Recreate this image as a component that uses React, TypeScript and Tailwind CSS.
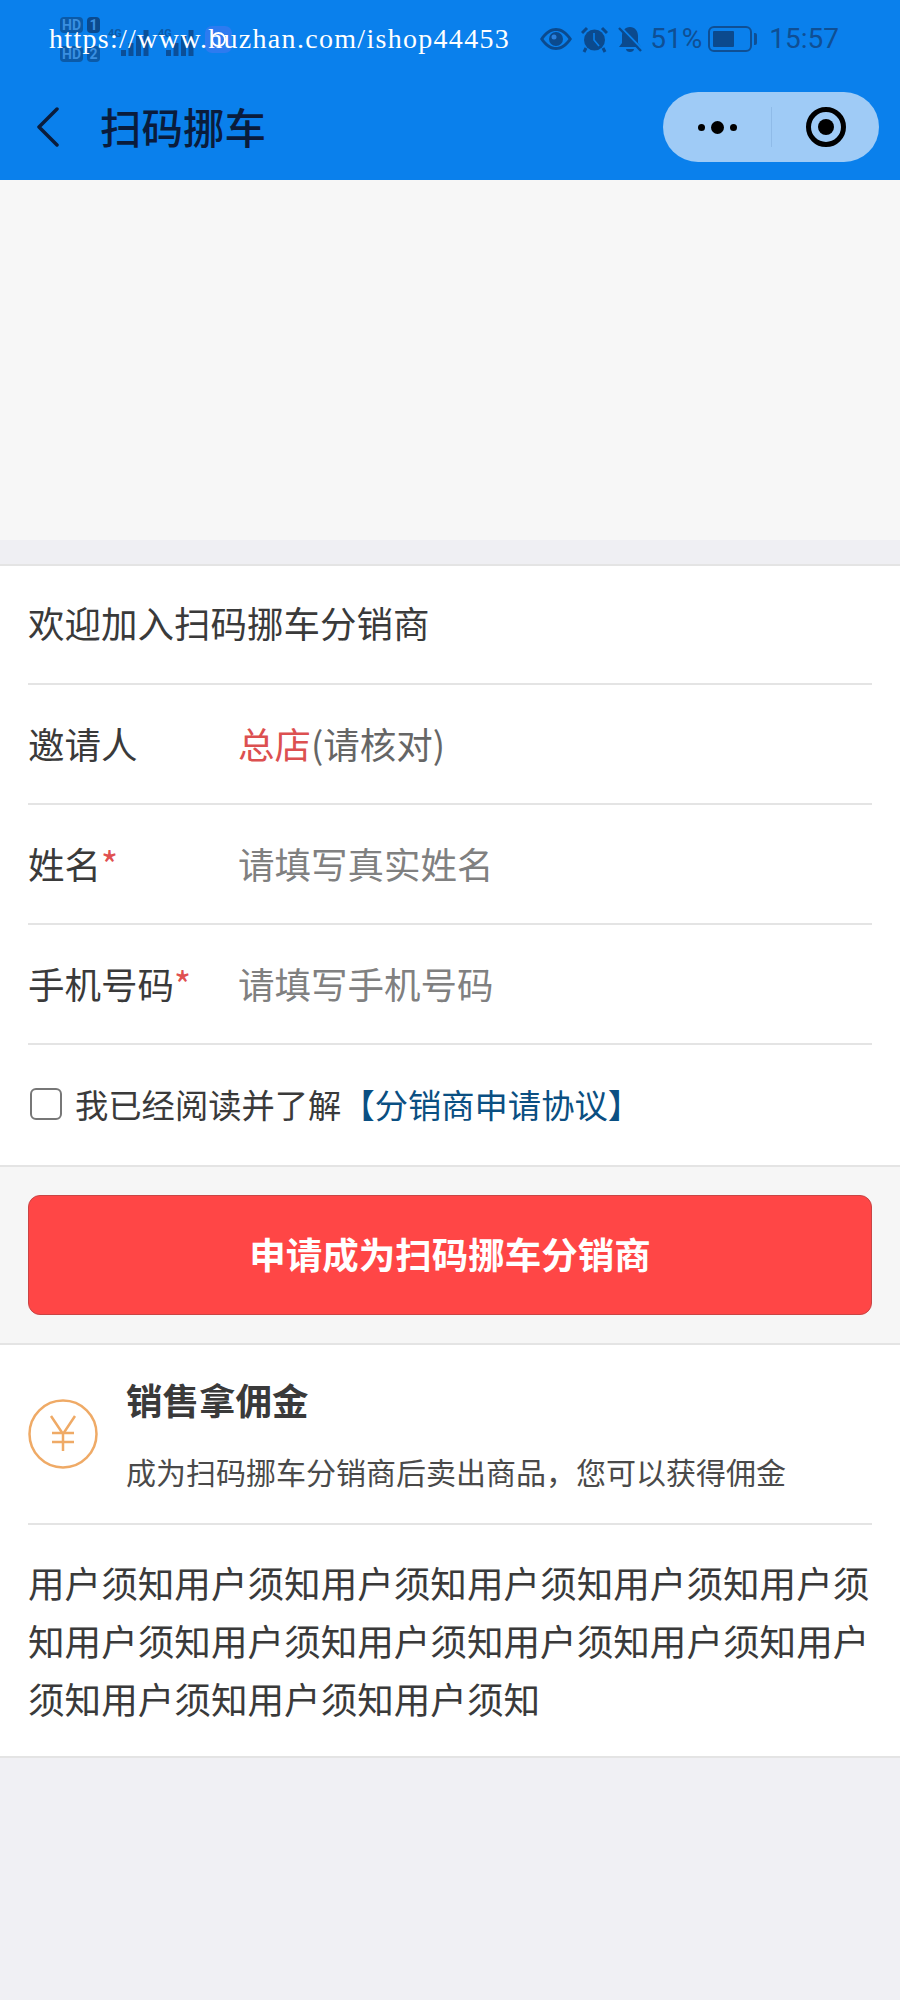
import React from 'react';

const cjk = "font-['Noto_Sans_CJK_SC','Noto_Sans',sans-serif]";

const StatusIcons: React.FC = () => (
  <div className="flex items-center">
    <svg width="32" height="22" viewBox="0 0 32 22" className="mr-[9px]">
      <path d="M0 11 C5 3 11 0 16 0 C21 0 27 3 32 11 C27 19 21 22 16 22 C11 22 5 19 0 11 Z M3.5 11 C7.5 16.500 11.500 19 16 19 C20.500 19 24.500 16.500 28.500 11 C24.500 5.500 20.500 3 16 3 C11.500 3 7.500 5.500 3.500 11 Z" fill="#0b4a8e" fillRule="evenodd" />
      <circle cx="16" cy="11" r="7" fill="#0b4a8e" />
      <circle cx="14" cy="9" r="2.500" fill="#2c80dc" />
    </svg>
    <svg width="27" height="27" viewBox="0 0 27 27" className="mr-[9px]">
      <circle cx="13.500" cy="14" r="10.500" fill="#0b4a8e" />
      <path d="M13 7 V14 L18 20" stroke="#0a80ec" strokeWidth="1.600" fill="none" />
      <path d="M1 7 L6 2 M26 7 L21 2" stroke="#0b4a8e" strokeWidth="3" />
      <path d="M5 22 L3 26 M22 22 L24 26" stroke="#0b4a8e" strokeWidth="3" />
    </svg>
    <svg width="26" height="27" viewBox="0 0 26 27" className="mr-[7px]">
      <path d="M13 1 C18 1 21 5 21 10 V17 L24 21 H2 L5 17 V10 C5 5 8 1 13 1 Z" fill="#0b4a8e" />
      <path d="M9 23 H17 C17 27 9 27 9 23 Z" fill="#0b4a8e" />
      <path d="M3.500 1 L26 24" stroke="#0a80ec" strokeWidth="2.200" />
      <path d="M2 2 L24 25" stroke="#0b4a8e" strokeWidth="2.400" />
    </svg>
    <span className="mr-[6px] font-['Roboto',sans-serif] text-[28px] leading-none text-[#0f4f94]">51%</span>
    <div className="mr-[12px] flex items-center">
      <div className="flex h-[26px] w-[44px] items-center rounded-[6px] border-2 border-[#0f4f94] p-[3px]">
        <div className="h-full w-[62%] rounded-[1px] bg-[#0b4a8e]" />
      </div>
      <div className="ml-[2px] h-[12px] w-[3px] rounded-r-[2px] bg-[#0f4f94]" />
    </div>
    <span className="font-['Roboto',sans-serif] text-[28px] leading-none text-[#0f4f94]">15:57</span>
  </div>
);

const Bars: React.FC<{ width: number }> = ({ width }) => (
  <svg width={width} height="26" viewBox="0 0 30 26">
    <path d="M1 26 V20 H6 V26 Z M8.500 26 V13 H13.500 V26 Z M16 26 V6 H21 V26 Z M23.500 26 V0 H28.500 V26 Z" fill="#0b4f98" />
  </svg>
);

const Signal: React.FC = () => (
  <div className="flex items-center">
    <div className="mr-[8px] grid grid-cols-[23px_13px] gap-x-[4px] gap-y-[13px] font-['Roboto',sans-serif] text-[14px] font-bold leading-[16px] text-[#3a8fe0]">
      <span className="rounded-[4px] bg-[#0b5aa8] text-center">HD</span>
      <span className="rounded-[4px] bg-[#0b4a8e] text-center">1</span>
      <span className="rounded-[4px] bg-[#0b5aa8] text-center">HD</span>
      <span className="rounded-[4px] bg-[#0b5aa8] text-center">2</span>
    </div>
    <div className="relative mr-[8px] pl-[12px] pt-[8px]">
      <Bars width={30} />
      <span className="absolute left-0 top-[6px] font-['Roboto',sans-serif] text-[11px] font-bold leading-none text-[#0b5aa8]">4G</span>
    </div>
    <div className="relative mr-[7px] pl-[4px] pt-[8px]">
      <Bars width={36} />
      <span className="absolute left-0 top-[6px] font-['Roboto',sans-serif] text-[11px] font-bold leading-none text-[#0b5aa8]">4G</span>
    </div>
    <div className="mt-[1px] flex h-[27px] w-[27px] items-center justify-center rounded-[7px] bg-[#2d7bf0]">
      <div className="h-[15px] w-[15px] rounded-full border-2 border-white" />
    </div>
  </div>
);

const Row: React.FC<{ label: React.ReactNode; children: React.ReactNode }> = ({ label, children }) => (
  <div className="flex h-[120px] items-center border-b-2 border-[#e4e4e4]">
    <div className="w-[210px] shrink-0 text-[36.5px] leading-none text-[#3a3a3a]">{label}</div>
    <div className="text-[36.5px] leading-none">{children}</div>
  </div>
);

const Star = () => <span className="text-[#e05050]">*</span>;

export default function App() {
  const notice = '用户须知'.repeat(15);
  return (
    <div className={`${cjk} flex h-[2000px] w-[900px] flex-col overflow-hidden bg-[#f0f0f4]`}>
      {/* header */}
      <div className="h-[180px] bg-[#0a80ec]">
        <div className="relative flex h-[78px] items-center justify-between pl-[60px] pr-[61px]">
          <Signal />
          <StatusIcons />
          {/* watermark over the status bar */}
          <span className="absolute left-[49px] top-[23px] whitespace-nowrap font-['Liberation_Serif',serif] text-[28px] leading-[32px] tracking-[1.300px] text-white">
            https://www.huzhan.com/ishop44453
          </span>
        </div>
        <div className="flex h-[98px] items-center justify-between pr-[21px]">
          <div className="flex items-center">
            <svg width="24" height="40" viewBox="0 0 24 40" className="ml-[36px]">
              <path d="M21 2 L3 20 L21 38" fill="none" stroke="#0a1c3c" strokeWidth="3.500" strokeLinecap="round" strokeLinejoin="round" />
            </svg>
            <span className="ml-[40px] text-[41.5px] font-medium leading-none text-[#0a1c3c]">扫码挪车</span>
          </div>
          <div className="flex h-[70px] w-[216px] items-center rounded-full bg-[#9fcbf6]">
            <div className="flex w-[108px] items-center justify-center gap-[6px]">
              <span className="h-[7px] w-[7px] rounded-full bg-black" />
              <span className="h-[13px] w-[13px] rounded-full bg-black" />
              <span className="h-[7px] w-[7px] rounded-full bg-black" />
            </div>
            <div className="h-[40px] w-px bg-[#8fbbe8]" />
            <div className="flex flex-1 items-center justify-center">
              <div className="flex h-[40px] w-[40px] items-center justify-center rounded-full border-[5px] border-black">
                <span className="h-[16px] w-[16px] rounded-full bg-black" />
              </div>
            </div>
          </div>
        </div>
      </div>

      {/* empty banner */}
      <div className="h-[360px] bg-[#f7f7f7]" />
      <div className="h-[24px] bg-[#efeff3]" />

      {/* form */}
      <div className="border-y-2 border-[#e4e4e4] bg-white px-[28px]">
        <div className="flex h-[119px] items-center border-b-2 border-[#e4e4e4] pb-[3px] text-[36.5px] leading-none text-[#3a3a3a]">
          欢迎加入扫码挪车分销商
        </div>
        <Row label="邀请人">
          <span className="text-[#dc5050]">总店</span>
          <span className="text-[#666666]">(请核对)</span>
        </Row>
        <Row label={<>姓名<Star /></>}>
          <span className="text-[#808080]">请填写真实姓名</span>
        </Row>
        <Row label={<>手机号码<Star /></>}>
          <span className="text-[#808080]">请填写手机号码</span>
        </Row>
        <div className="flex h-[120px] items-center pb-[3px] text-[33.3px] leading-none text-[#3a3a3a]">
          <div className="ml-[2px] mr-[13px] h-[32px] w-[32px] rounded-[6px] border-2 border-[#777777] bg-white" />
          <span>我已经阅读并了解</span>
          <span className="text-[#0a4f82]">【分销商申请协议】</span>
        </div>
      </div>

      {/* button */}
      <div className="bg-[#f6f6f6] px-[28px] py-[28px]">
        <button className="flex h-[120px] w-full items-center justify-center rounded-[12px] border border-[#c94444] bg-[#ff4646] pb-[1px] text-[36.5px] font-bold leading-none text-white">
          申请成为扫码挪车分销商
        </button>
      </div>

      {/* commission + notice */}
      <div className="border-y-2 border-[#e4e4e4] bg-white px-[28px]">
        <div className="flex h-[180px] items-center border-b-2 border-[#e4e4e4]">
          <svg width="70" height="70" viewBox="0 0 70 70" className="shrink-0">
            <circle cx="35" cy="35" r="33.500" fill="none" stroke="#efaa66" strokeWidth="2.500" />
            <path d="M23 17 L35 35 L47 17 M24 34 H46 M24 43 H46 M35 35 V52" fill="none" stroke="#efaa66" strokeWidth="2.500" />
          </svg>
          <div className="ml-[28px]">
            <div className="text-[36.5px] font-bold leading-none text-[#3a3a3a]">销售拿佣金</div>
            <div className="mt-[37px] text-[30px] leading-none text-[#4a4a4a]">成为扫码挪车分销商后卖出商品，您可以获得佣金</div>
          </div>
        </div>
        <p className="pb-[28px] pt-[29px] text-[36.6px] leading-[58px] text-[#3a3a3a]">{notice}</p>
      </div>
    </div>
  );
}
